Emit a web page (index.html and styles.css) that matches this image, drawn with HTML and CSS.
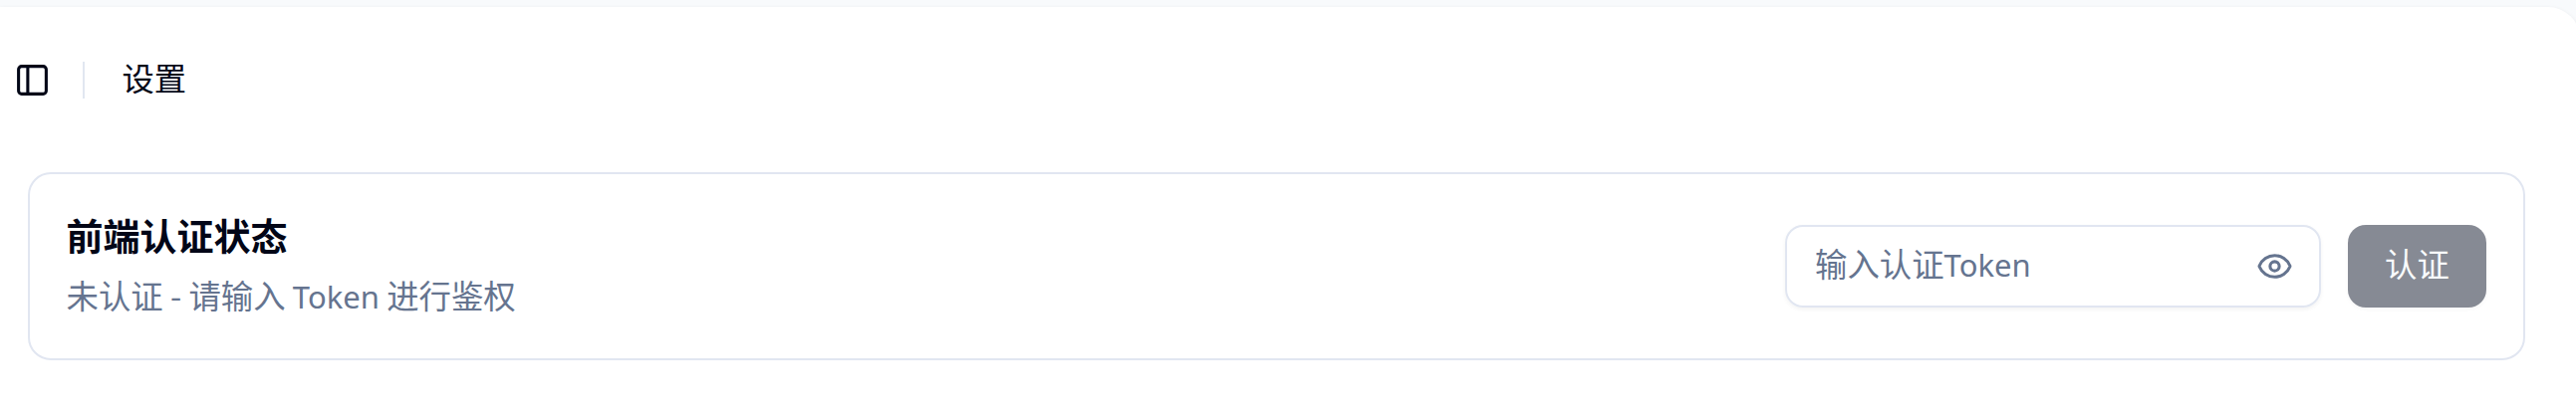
FILE: index.html
```html
<!DOCTYPE html>
<html lang="zh-CN">
<head>
<meta charset="utf-8">
<title>设置</title>
<link rel="stylesheet" href="styles.css">
</head>
<body>
<main class="panel">
  <header class="topbar">
    <svg class="sidebar-icon" viewBox="0 0 24 24" fill="none" stroke="currentColor" stroke-width="2" stroke-linecap="round" stroke-linejoin="round"><rect width="18" height="18" x="3" y="3" rx="2"/><path d="M9 3v18"/></svg>
    <span class="divider"></span>
    <h1 class="page-title">设置</h1>
  </header>
  <section class="card">
    <div class="info">
      <h2 class="card-title">前端认证状态</h2>
      <p class="card-text">未认证 - 请输入 <span class="latin">Token</span> 进行鉴权</p>
    </div>
    <div class="actions">
      <div class="field">
        <span class="placeholder">输入认证<span class="latin">Token</span></span>
        <svg class="eye-icon" viewBox="0 0 24 24" fill="none" stroke="currentColor" stroke-width="2" stroke-linecap="round" stroke-linejoin="round"><path d="M2.062 12.348a1 1 0 0 1 0-.696 10.75 10.75 0 0 1 19.876 0 1 1 0 0 1 0 .696 10.75 10.75 0 0 1-19.876 0"/><circle cx="12" cy="12" r="3"/></svg>
      </div>
      <button class="submit" disabled>认证</button>
    </div>
  </section>
</main>
</body>
</html>
```
FILE: styles.css
```css
* { box-sizing: border-box; }
html { overflow: hidden; }
body {
  margin: 0;
  height: 418px;
  overflow: hidden;
  padding-top: 7px;
  background: #f8fafc;
  color: #020617;
  font-family: "Noto Sans CJK SC", sans-serif;
}
.panel {
  width: 2590px;
  height: 411px;
  background: #fff;
  border-radius: 0 32px 0 0;
  box-shadow: 0 2px 5px rgba(0, 0, 0, .1);
}
.topbar {
  display: flex;
  align-items: center;
  height: 147px;
  padding-left: 14px;
}
.sidebar-icon { width: 37px; height: 37px; }
.divider { width: 2px; height: 37px; margin-left: 32px; background: #e1e7f1; }
.page-title {
  margin: 0 0 0 37.5px;
  padding-bottom: 8px;
  font-size: 32.3px;
  line-height: 48px;
  font-weight: 400;
}
.card {
  display: flex;
  align-items: center;
  justify-content: space-between;
  width: 2507px;
  height: 189px;
  margin: 19px 0 0 28px;
  padding: 0 37px 0 36.5px;
  border: 2px solid #e1e6f1;
  border-radius: 23px;
}
.info { padding-bottom: 3px; }
.card-title { margin: 0; font-size: 37px; line-height: 56px; font-weight: 700; }
.card-text { margin: 5px 0 0; font-size: 32.4px; line-height: 54px; color: #65748f; }
.latin { font-family: "Noto Sans", sans-serif; font-size: 31px; }
.actions { display: flex; gap: 27px; }
.field {
  display: flex;
  align-items: center;
  justify-content: space-between;
  width: 538px;
  height: 83px;
  padding: 0 26px 0 28px;
  border: 2px solid #e1e6f1;
  border-radius: 18px;
  box-shadow: 0 2px 4px rgba(0, 0, 0, .05);
  color: #65748f;
}
.placeholder { padding-bottom: 6px; font-size: 32.4px; line-height: 48px; }
.eye-icon { width: 37px; height: 37px; }
.submit {
  width: 139px;
  height: 83px;
  padding: 0 0 7px;
  border: 0;
  border-radius: 18px;
  background: #868a94;
  box-shadow: 0 2px 4px rgba(0, 0, 0, .03);
  color: #f8fafc;
  font: 400 32.4px/48px "Noto Sans CJK SC", sans-serif;
}
```
